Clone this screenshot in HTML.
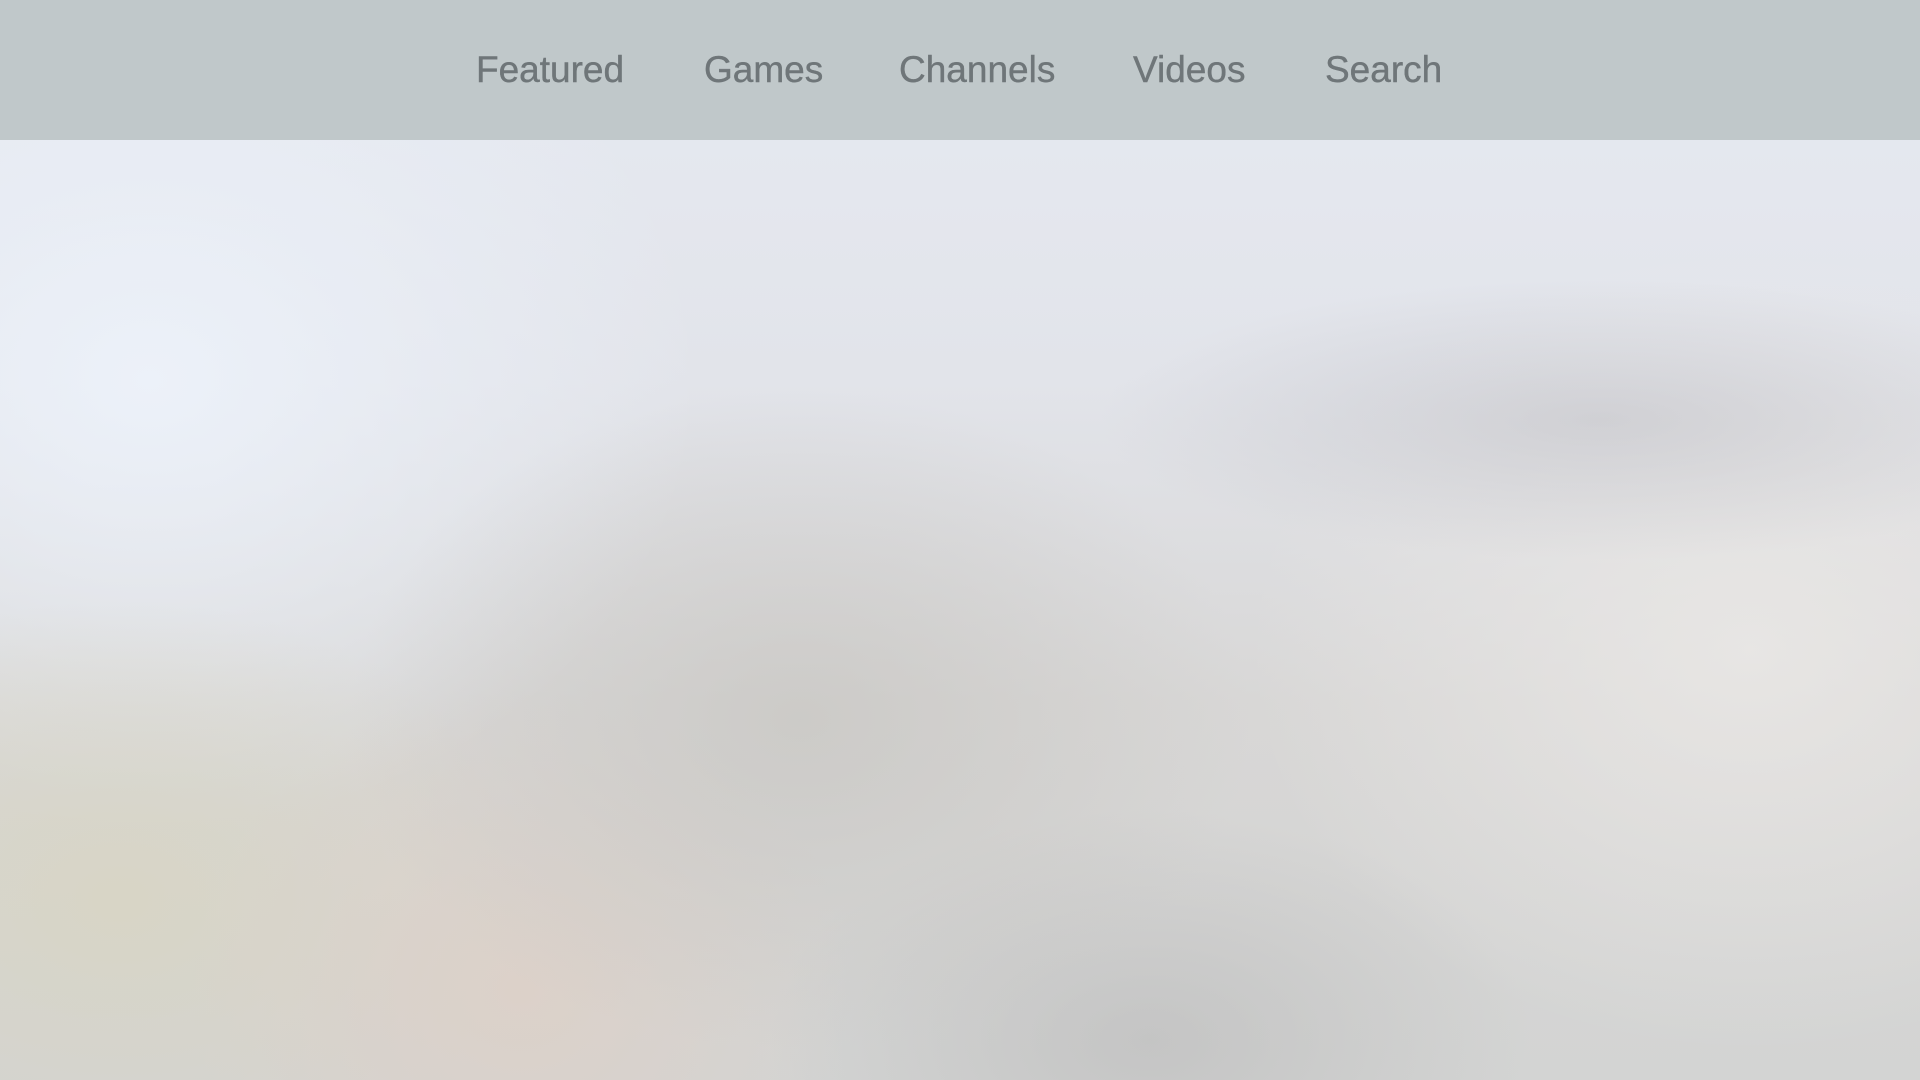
<!DOCTYPE html>
<html><head><meta charset="utf-8"><style>
html,body{margin:0;padding:0;width:1920px;height:1080px;overflow:hidden}
body{position:relative;font-family:"Liberation Sans",sans-serif;
background:
radial-gradient(ellipse 500px 140px at 1600px 420px, rgba(195,195,200,0.6), rgba(195,195,200,0) 100%),
radial-gradient(ellipse 450px 330px at 800px 720px, rgba(198,196,192,0.65), rgba(198,196,192,0) 100%),
radial-gradient(ellipse 380px 230px at 1150px 1040px, rgba(190,190,190,0.7), rgba(190,190,190,0) 100%),
radial-gradient(ellipse 330px 300px at 520px 990px, rgba(222,208,198,0.8), rgba(222,208,198,0) 100%),
radial-gradient(ellipse 420px 300px at 120px 900px, rgba(216,213,196,0.9), rgba(216,213,196,0) 100%),
radial-gradient(ellipse 550px 450px at 150px 380px, rgba(236,241,249,1), rgba(236,241,249,0) 100%),
radial-gradient(ellipse 500px 400px at 1750px 650px, rgba(233,231,229,0.9), rgba(233,231,229,0) 100%),
linear-gradient(180deg,#e6eaf2 0%,#e2e4ea 35%,#d8d7d6 65%,#d3d4d3 100%);}
.nav{position:absolute;left:0;top:0;width:1920px;height:140px;background:#c0c8ca}
.nav span{position:absolute;top:48px;font-size:37px;color:#6f7679;line-height:44px;white-space:nowrap;-webkit-text-stroke:0.4px #6f7679}
</style></head><body>
<div class="nav">
<span style="left:476px">Featured</span>
<span style="left:704px">Games</span>
<span style="left:899px">Channels</span>
<span style="left:1133px">Videos</span>
<span style="left:1325px">Search</span>
</div>
</body></html>
